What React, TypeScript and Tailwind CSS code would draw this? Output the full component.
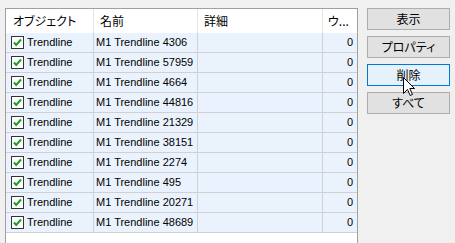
import React from "react";

const rows = [
  "M1 Trendline 4306",
  "M1 Trendline 57959",
  "M1 Trendline 4664",
  "M1 Trendline 44816",
  "M1 Trendline 21329",
  "M1 Trendline 38151",
  "M1 Trendline 2274",
  "M1 Trendline 495",
  "M1 Trendline 20271",
  "M1 Trendline 48689",
];

const jp = "font-['Meiryo_UI','Noto_Sans_CJK_JP',sans-serif] [font-feature-settings:'palt']";
const lat = "font-['Liberation_Sans','Noto_Sans_CJK_JP',sans-serif]";

function Check() {
  return (
    <svg width="13" height="13" viewBox="0 0 13 13" className="shrink-0">
      <rect x="0.5" y="0.5" width="12" height="12" fill="#ffffff" stroke="#333333" />
      <path d="M3 6.5 L5.2 9 L10 3.5" fill="none" stroke="#1f9d1f" strokeWidth="2" />
    </svg>
  );
}

function Btn({ label, hover }: { label: string; hover?: boolean }) {
  return (
    <div
      className={`h-[22px] w-[83px] flex items-center justify-center border text-[12px] text-black ${jp} ${
        hover ? "bg-[#e5f1fb] border-[#0078d7]" : "bg-[#e1e1e1] border-[#adadad]"
      }`}
    >
      {label}
    </div>
  );
}

export default function App() {
  return (
    <div className="w-[455px] h-[243px] bg-[#f0f0f0] overflow-hidden relative flex items-start pl-[5px] pt-[8px] gap-[8px]">
      <div className="w-[353px] h-[260px] shrink-0 border border-[#a0a0a0] bg-white flex flex-col">
        <div className={`flex h-[24px] text-[12px] text-black ${jp}`}>
          <div className="w-[88px] border-r border-[#e5e5e5] flex items-center pl-[7px]">オブジェクト</div>
          <div className="w-[104px] border-r border-[#e5e5e5] flex items-center pl-[6px]">名前</div>
          <div className="w-[125px] border-r border-[#e5e5e5] flex items-center pl-[6px]">詳細</div>
          <div className="w-[34px] flex items-center pl-[5px]">ウ...</div>
        </div>
        {rows.map((r) => (
          <div key={r} className={`flex h-[20px] bg-[#eaf3fd] border-b border-[#d0d0d0] text-[11px] text-black ${lat}`}>
            <div className="w-[88px] border-r border-[#d0d0d0] flex items-center pl-[5px] gap-[3px]">
              <Check />
              <span>Trendline</span>
            </div>
            <div className="w-[104px] border-r border-[#d0d0d0] flex items-center pl-[2px]">{r}</div>
            <div className="w-[125px] border-r border-[#d0d0d0]" />
            <div className="w-[34px] flex items-center justify-end pr-[4px]">0</div>
          </div>
        ))}
      </div>
      <div className="flex flex-col gap-[6px] pl-[1px]">
        <Btn label="表示" />
        <Btn label="プロパティ" />
        <Btn label="削除" hover />
        <Btn label="すべて" />
      </div>
      <svg
        className="absolute left-[403px] top-[77px]"
        width="13"
        height="20"
        viewBox="0 0 13 20"
      >
        <path
          d="M0.5 0.5 L0.5 16.5 L4.5 12.5 L7.2 18.5 L9.5 17.5 L6.8 11.5 L11.5 11.5 Z"
          fill="#ffffff"
          stroke="#000000"
          strokeWidth="1"
          strokeLinejoin="miter"
        />
      </svg>
    </div>
  );
}
